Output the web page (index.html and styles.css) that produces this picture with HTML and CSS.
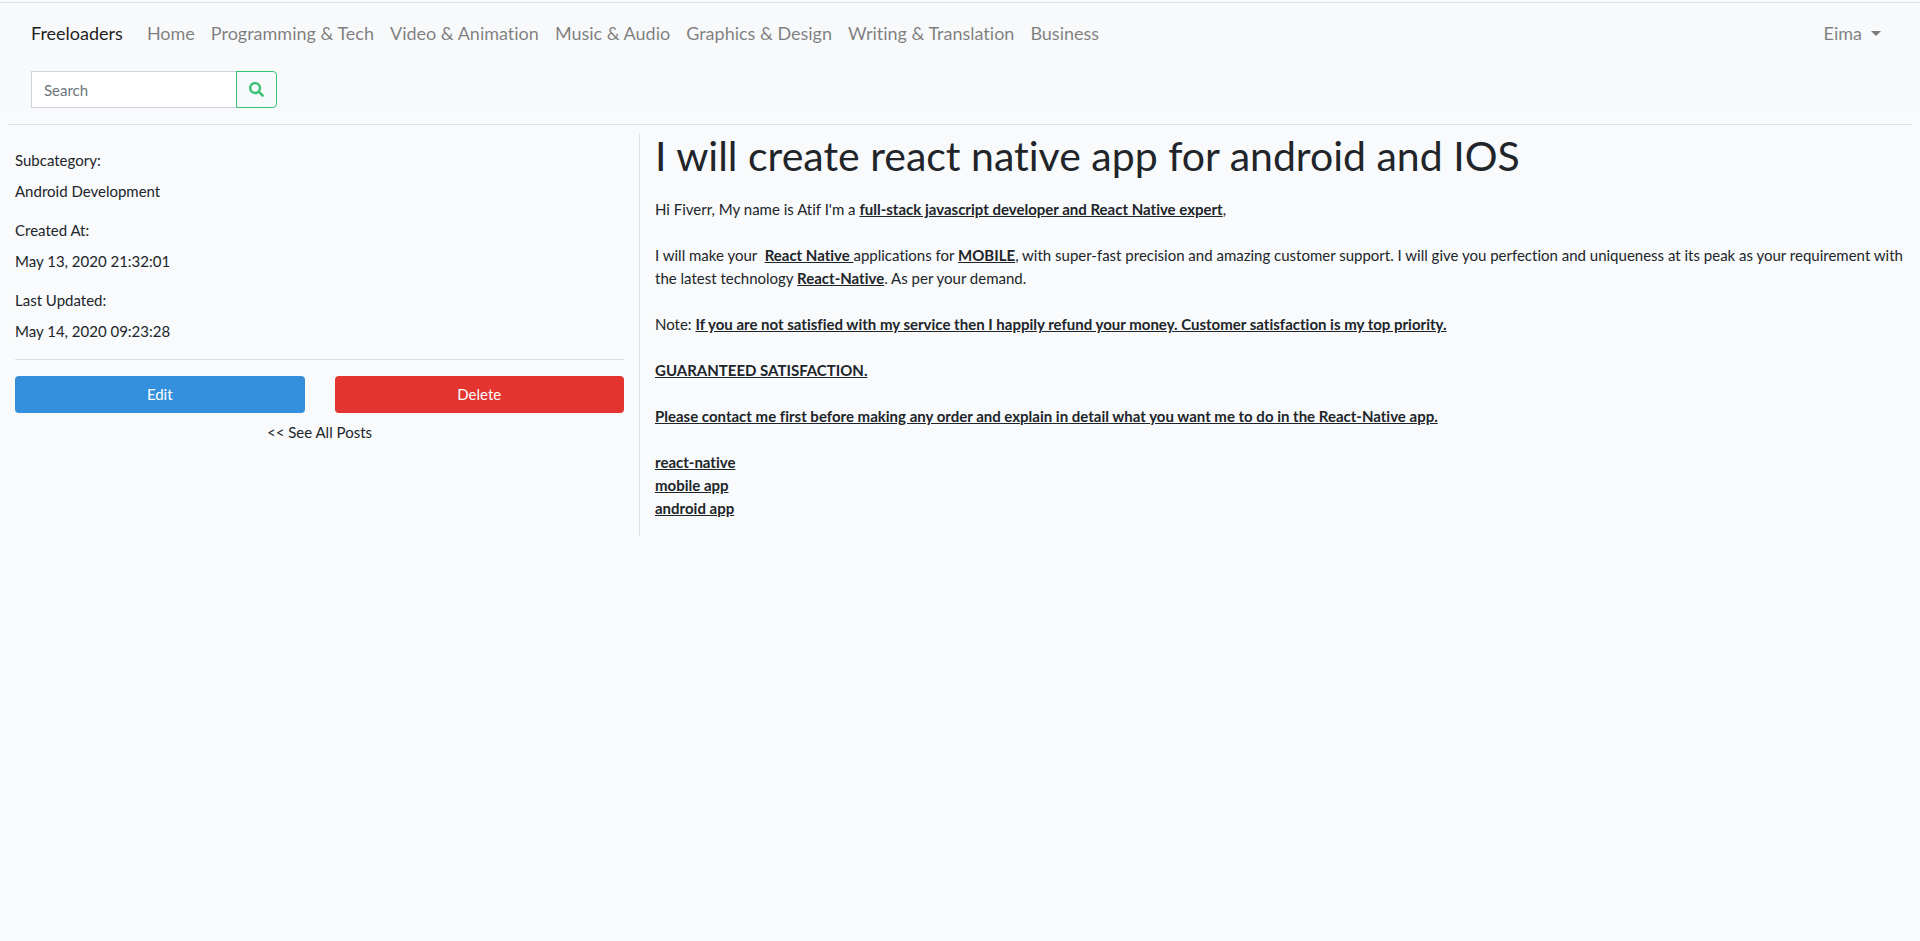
FILE: index.html
```
<!DOCTYPE html>
<html lang="en">
<head>
<meta charset="utf-8">
<title>Freeloaders</title>
<link rel="stylesheet" href="styles.css">
</head>
<body>
<header class="site-header">
  <nav class="navbar" aria-label="Main">
    <a class="brand" href="#">Freeloaders</a>
    <ul class="nav-list">
      <li><a class="nav-link" href="#">Home</a></li>
      <li><a class="nav-link" href="#">Programming &amp; Tech</a></li>
      <li><a class="nav-link" href="#">Video &amp; Animation</a></li>
      <li><a class="nav-link" href="#">Music &amp; Audio</a></li>
      <li><a class="nav-link" href="#">Graphics &amp; Design</a></li>
      <li><a class="nav-link" href="#">Writing &amp; Translation</a></li>
      <li><a class="nav-link" href="#">Business</a></li>
    </ul>
    <a class="nav-link user-menu" href="#">Eima <span class="caret"></span></a>
  </nav>
  <form class="search" role="search">
    <input class="search-input" type="text" placeholder="Search" aria-label="Search">
    <button class="search-button" type="button" aria-label="Submit search">
      <svg class="search-icon" viewBox="0 0 512 512" aria-hidden="true"><path fill="currentColor" d="M505 442.700L405.300 343c-4.500-4.500-10.600-7-17-7H372c27.600-35.300 44-79.700 44-128C416 93.100 322.900 0 208 0S0 93.100 0 208s93.100 208 208 208c48.300 0 92.700-16.400 128-44v16.300c0 6.400 2.500 12.500 7 17l99.700 99.700c9.400 9.400 24.600 9.400 33.900 0l28.300-28.300c9.400-9.400 9.400-24.600.1-34zM208 336c-70.700 0-128-57.200-128-128 0-70.700 57.200-128 128-128 70.700 0 128 57.200 128 128 0 70.700-57.200 128-128 128z"/></svg>
    </button>
  </form>
</header>
<hr class="header-rule">
<main class="content">
  <aside class="details">
    <dl class="facts">
      <div class="fact"><dt>Subcategory:</dt><dd>Android Development</dd></div>
      <div class="fact"><dt>Created At:</dt><dd>May 13, 2020 21:32:01</dd></div>
      <div class="fact"><dt>Last Updated:</dt><dd>May 14, 2020 09:23:28</dd></div>
    </dl>
    <hr class="rule">
    <div class="actions">
      <a class="button edit" href="#">Edit</a>
      <button class="button delete" type="button">Delete</button>
    </div>
    <a class="back-link" href="#">&lt;&lt; See All Posts</a>
  </aside>
  <article class="post">
    <h1>I will create react native app for android and IOS</h1>
    <p>Hi Fiverr, My name is Atif I'm a <strong>full-stack javascript developer and React Native expert</strong>,</p>
    <p>I will make your &nbsp;<strong>React Native </strong>applications for <strong>MOBILE</strong>, with super-fast precision and amazing customer support. I will give you perfection and uniqueness at its peak as your requirement with the latest technology <strong>React-Native</strong>. As per your demand.</p>
    <p>Note: <strong>If you are not satisfied with my service then I happily refund your money. Customer satisfaction is my top priority.</strong></p>
    <p><strong>GUARANTEED SATISFACTION.</strong></p>
    <p><strong>Please contact me first before making any order and explain in detail what you want me to do in the React-Native app.</strong></p>
    <p><strong>react-native</strong><br><strong>mobile app</strong><br><strong>android app</strong></p>
  </article>
</main>
</body>
</html>
```
FILE: styles.css
```
*, *::before, *::after { box-sizing: border-box; }

body {
  margin: 0;
  padding-top: 2px;
  background: #f8fafc;
  color: #212529;
  font-family: Lato, "Open Sans", sans-serif;
  font-size: 15px;
  font-variant-ligatures: none;
  line-height: 23px;
}

a { color: inherit; text-decoration: none; }

hr {
  height: 1px;
  border: 0;
  background: rgba(0, 0, 0, 0.1);
}

.site-header {
  padding: 8px 31px;
  border-top: 1px solid #dee2e6;
  background: #f8f9fa;
}

.navbar {
  display: flex;
  align-items: center;
  font-size: 18px;
  line-height: 28px;
}

.brand {
  margin-right: 16px;
  color: rgba(0, 0, 0, 0.9);
}

.nav-list {
  display: flex;
  flex: 1;
  margin: 0;
  padding: 0;
  list-style: none;
}

.nav-link {
  display: block;
  padding: 8px;
  color: rgba(0, 0, 0, 0.5);
}

.user-menu {
  display: flex;
  align-items: center;
  gap: 9px;
}

.caret {
  border: 5px solid transparent;
  border-top-color: currentColor;
  border-bottom: 0;
}

.search { display: flex; margin-top: 16px; }

.search-input {
  width: 206px;
  height: 37px;
  padding: 6px 12px;
  border: 1px solid #ced4da;
  border-radius: 0;
  background: #fff;
  color: #495057;
  font: inherit;
}

.search-input::placeholder { color: #6c757d; opacity: 1; }

.search-button {
  display: flex;
  align-items: center;
  justify-content: center;
  width: 41px;
  height: 37px;
  margin-left: -1px;
  padding: 0;
  border: 1px solid #38c172;
  border-radius: 0 4px 4px 0;
  background: transparent;
  color: #38c172;
}

.search-icon { width: 15px; height: 15px; }

.header-rule { margin: 8px 8px; }

.content {
  display: grid;
  grid-template-columns: 1fr 2fr;
}

.details {
  padding: 16px 15px;
  border-right: 1px solid #dee2e6;
}

.facts { margin: 0; }

.fact { margin-bottom: 16px; }

.fact dt { margin-bottom: 8px; }

.fact dd { margin: 0; }

.rule { margin: 0 0 16px; }

.actions {
  display: grid;
  grid-template-columns: 1fr 1fr;
  gap: 30px;
}

.button {
  padding: 7px 12px;
  border: 0;
  border-radius: 4px;
  color: #fff;
  font: inherit;
  text-align: center;
}

.edit { background: #3490dc; }

.delete { background: #e3342f; }

.back-link {
  display: block;
  margin-top: 8px;
  text-align: center;
}

.post { padding: 0 15px; }

.post h1 {
  margin: 0 0 19px;
  font-size: 41px;
  font-weight: 400;
  line-height: 46px;
}

.post p { margin: 0 0 23px; }

.post p:last-child { margin-bottom: 16px; }

.post strong { text-decoration: underline; }
```
